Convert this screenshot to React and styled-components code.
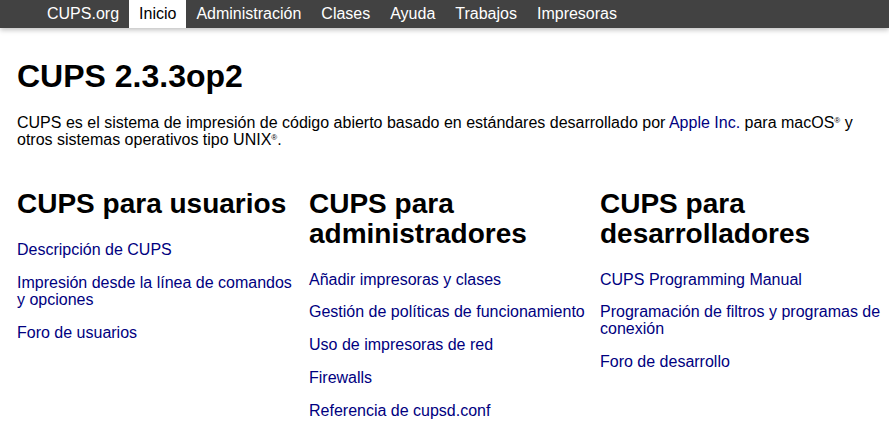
import React from "react";
import styled, { createGlobalStyle } from "styled-components";

const GlobalStyle = createGlobalStyle`
  html, body {
    margin: 0;
    padding: 0;
    background: #ffffff;
  }
  body {
    font-family: "Liberation Sans", Arial, Helvetica, sans-serif;
    font-size: 16px;
    line-height: 1.06;
    color: #000000;
  }
`;

const Header = styled.header`
  height: 28px;
  background: #424242;
  box-shadow: 0 2px 5px rgba(0, 0, 0, 0.25);
  position: relative;
  z-index: 2;
`;

const NavList = styled.ul`
  list-style: none;
  margin: 0;
  padding: 0 0 0 37px;
  display: flex;
`;

const NavLink = styled.a`
  display: block;
  padding: 5px 10px;
  height: 18px;
  line-height: 18px;
  font-size: 16px;
  text-decoration: none;
  color: ${(p) => (p.$active ? "#000000" : "#ffffff")};
  background: ${(p) => (p.$active ? "#ffffff" : "transparent")};
`;

const Main = styled.main`
  padding: 10.5px 17px 0 17px;
`;

const Title = styled.h1`
  font-size: 32px;
  font-weight: bold;
  margin: 21.44px 0;
`;

const Intro = styled.p`
  margin: 16px 0;
  max-width: 855px;
`;

const Sup = styled.sup`
  font-size: 8px;
  vertical-align: 5px;
  line-height: 0;
`;

const Link = styled.a`
  color: #000080;
  text-decoration: none;
`;

const Columns = styled.div`
  display: grid;
  grid-template-columns: 284px 283px 283px;
  column-gap: 8px;
  margin-top: 16px;
`;

const Column = styled.section`
  display: flex;
  flex-direction: column;
`;

const ColumnTitle = styled.h2`
  font-size: 28px;
  font-weight: bold;
  margin: 24px 0 23px 0;
`;

const Item = styled.p`
  margin: 0 0 16px 0;
`;

const nav = [
  "CUPS.org",
  "Inicio",
  "Administración",
  "Clases",
  "Ayuda",
  "Trabajos",
  "Impresoras",
];

const columns = [
  {
    title: "CUPS para usuarios",
    links: [
      "Descripción de CUPS",
      "Impresión desde la línea de comandos y opciones",
      "Foro de usuarios",
    ],
  },
  {
    title: "CUPS para administradores",
    links: [
      "Añadir impresoras y clases",
      "Gestión de políticas de funcionamiento",
      "Uso de impresoras de red",
      "Firewalls",
      "Referencia de cupsd.conf",
    ],
  },
  {
    title: "CUPS para desarrolladores",
    links: [
      "CUPS Programming Manual",
      "Programación de filtros y programas de conexión",
      "Foro de desarrollo",
    ],
  },
];

export default function App() {
  return (
    <>
      <GlobalStyle />
      <Header>
        <NavList>
          {nav.map((n) => (
            <li key={n}>
              <NavLink href="#" $active={n === "Inicio"}>
                {n}
              </NavLink>
            </li>
          ))}
        </NavList>
      </Header>
      <Main>
        <Title>CUPS 2.3.3op2</Title>
        <Intro>
          CUPS es el sistema de impresión de código abierto basado en estándares
          desarrollado por <Link href="#">Apple Inc.</Link> para macOS
          <Sup>®</Sup> y otros sistemas operativos tipo UNIX<Sup>®</Sup>.
        </Intro>
        <Columns>
          {columns.map((c) => (
            <Column key={c.title}>
              <ColumnTitle>{c.title}</ColumnTitle>
              {c.links.map((l) => (
                <Item key={l}>
                  <Link href="#">{l}</Link>
                </Item>
              ))}
            </Column>
          ))}
        </Columns>
      </Main>
    </>
  );
}
